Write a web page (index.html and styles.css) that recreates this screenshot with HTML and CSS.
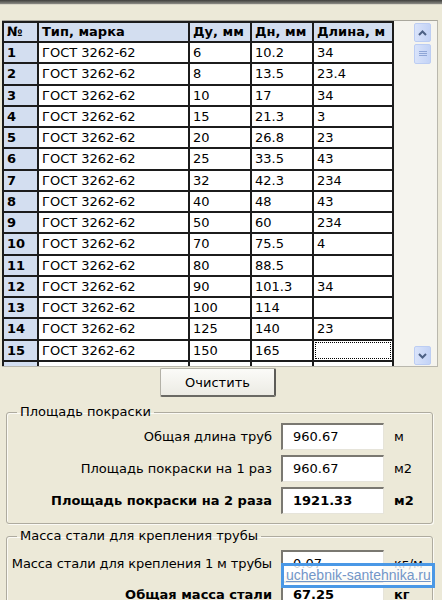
FILE: index.html
```html
<!DOCTYPE html>
<html lang="ru">
<head>
<meta charset="utf-8">
<title>Расчёт</title>
<link rel="stylesheet" href="styles.css">
</head>
<body>
<div class="titlebar"></div>
<div class="grid-frame">
  <div class="datagrid">
    <div class="c hdr">№</div><div class="c hdr">Тип, марка</div><div class="c hdr">Ду, мм</div><div class="c hdr">Дн, мм</div><div class="c hdr">Длина, м</div>
    <div class="c num">1</div><div class="c">ГОСТ 3262-62</div><div class="c">6</div><div class="c">10.2</div><div class="c">34</div>
    <div class="c num">2</div><div class="c">ГОСТ 3262-62</div><div class="c">8</div><div class="c">13.5</div><div class="c">23.4</div>
    <div class="c num">3</div><div class="c">ГОСТ 3262-62</div><div class="c">10</div><div class="c">17</div><div class="c">34</div>
    <div class="c num">4</div><div class="c">ГОСТ 3262-62</div><div class="c">15</div><div class="c">21.3</div><div class="c">3</div>
    <div class="c num">5</div><div class="c">ГОСТ 3262-62</div><div class="c">20</div><div class="c">26.8</div><div class="c">23</div>
    <div class="c num">6</div><div class="c">ГОСТ 3262-62</div><div class="c">25</div><div class="c">33.5</div><div class="c">43</div>
    <div class="c num">7</div><div class="c">ГОСТ 3262-62</div><div class="c">32</div><div class="c">42.3</div><div class="c">234</div>
    <div class="c num">8</div><div class="c">ГОСТ 3262-62</div><div class="c">40</div><div class="c">48</div><div class="c">43</div>
    <div class="c num">9</div><div class="c">ГОСТ 3262-62</div><div class="c">50</div><div class="c">60</div><div class="c">234</div>
    <div class="c num">10</div><div class="c">ГОСТ 3262-62</div><div class="c">70</div><div class="c">75.5</div><div class="c">4</div>
    <div class="c num">11</div><div class="c">ГОСТ 3262-62</div><div class="c">80</div><div class="c">88.5</div><div class="c"></div>
    <div class="c num">12</div><div class="c">ГОСТ 3262-62</div><div class="c">90</div><div class="c">101.3</div><div class="c">34</div>
    <div class="c num">13</div><div class="c">ГОСТ 3262-62</div><div class="c">100</div><div class="c">114</div><div class="c"></div>
    <div class="c num">14</div><div class="c">ГОСТ 3262-62</div><div class="c">125</div><div class="c">140</div><div class="c">23</div>
    <div class="c num">15</div><div class="c">ГОСТ 3262-62</div><div class="c">150</div><div class="c">165</div><div class="c focus"></div>
    <div class="c num"></div><div class="c"></div><div class="c"></div><div class="c"></div><div class="c"></div>
  </div>
  <div class="vscroll">
    <div class="sbtn"><svg width="9" height="6" viewBox="0 0 9 6"><polyline points="1,5 4.5,1.5 8,5" fill="none" stroke="#4d6185" stroke-width="2"/></svg></div>
    <div class="thumb"><svg width="8" height="8" viewBox="0 0 8 8"><path d="M0 1.5h8M0 3.5h8M0 5.5h8" stroke="#8ea5d6" stroke-width="1"/></svg></div>
    <div class="track"></div>
    <div class="sbtn"><svg width="9" height="6" viewBox="0 0 9 6"><polyline points="1,1 4.5,4.5 8,1" fill="none" stroke="#4d6185" stroke-width="2"/></svg></div>
  </div>
</div>
<div class="btn-row"><button class="btn" type="button">Очистить</button></div>
<fieldset class="group g1">
  <legend>Площадь покраски</legend>
  <div class="frows">
    <div class="frow"><span class="flabel">Общая длина труб</span><span class="fbox">960.67</span><span class="funit">м</span></div>
    <div class="frow"><span class="flabel">Площадь покраски на 1 раз</span><span class="fbox">960.67</span><span class="funit">м2</span></div>
    <div class="frow bold"><span class="flabel">Площадь покраски на 2 раза</span><span class="fbox">1921.33</span><span class="funit">м2</span></div>
  </div>
</fieldset>
<fieldset class="group g2">
  <legend>Масса стали для крепления трубы</legend>
  <div class="frows g2rows">
    <div class="frow"><span class="flabel narrow">Масса стали для крепления 1 м трубы</span><span class="fbox">0.07</span><span class="funit">кг/м</span></div>
    <div class="frow bold"><span class="flabel">Общая масса стали</span><span class="fbox">67.25</span><span class="funit">кг</span></div>
  </div>
</fieldset>
<div class="watermark">uchebnik-santehnika.ru</div>
</body>
</html>
```
FILE: styles.css
```css
html, body {
  margin: 0;
  padding: 0;
}
body {
  width: 442px;
  height: 600px;
  overflow: hidden;
  position: relative;
  background: #ece9d8;
  font-family: "DejaVu Sans", Verdana, sans-serif;
  font-size: 13px;
  color: #000;
}
.titlebar {
  height: 4px;
  background: linear-gradient(#3f3f3c, #8d8c86);
  border-bottom: 1px solid #d9d6c8;
}
.grid-frame {
  margin: 15px 0 0 2px;
  width: 436px;
  height: 347px;
  box-sizing: border-box;
  border-top: 1px solid #a9a79d;
  border-bottom: 1px solid #b9b7ad;
  border-right: 1px solid #b9b7ad;
  background: #f5f4ee;
  display: flex;
  overflow: hidden;
}
.datagrid {
  flex: none;
  align-self: flex-start;
  display: grid;
  grid-template-columns: 33px 149px 60px 60px 78px;
  grid-template-rows: 18px;
  grid-auto-rows: 19.25px;
  gap: 2px;
  padding: 2px 2px 0 2px;
  background: #1c1c1c;
}
.c {
  background: #fff;
  padding-left: 3px;
  line-height: 19px;
  white-space: nowrap;
  overflow: hidden;
}
.c.hdr {
  background: #d3def0;
  font-weight: bold;
  line-height: 18px;
}
.c.num {
  background: #d3def0;
  font-weight: bold;
}
.c.focus {
  outline: 1px dotted #000;
  outline-offset: -2px;
}
.vscroll {
  margin-left: auto;
  margin-right: 6px;
  width: 17px;
  display: flex;
  flex-direction: column;
  padding: 2px 0 1px;
}
.sbtn, .thumb {
  box-sizing: border-box;
  border: 1px solid #bccdf3;
  border-radius: 2px;
  background: linear-gradient(90deg, #d9e3fa, #c3d3f6);
  display: flex;
  align-items: center;
  justify-content: center;
}
.sbtn {
  height: 19px;
}
.thumb {
  height: 20px;
  margin-top: 2px;
}
.track {
  flex: 1;
}
.btn-row {
  padding-left: 160px;
  margin-top: 1px;
}
.btn {
  display: block;
  width: 116px;
  height: 29px;
  box-sizing: border-box;
  margin: 0;
  padding: 0;
  font-family: "DejaVu Sans", Verdana, sans-serif;
  font-size: 13px;
  color: #000;
  background: linear-gradient(#fbfbf8, #ecebe4);
  border: 1px solid #b3b1a7;
  border-right: 2px solid #5d5c58;
  border-bottom: 2px solid #6a6964;
  border-radius: 2px;
}
.group {
  box-sizing: border-box;
  width: 427px;
  margin: 7px 0 0 6px;
  padding: 0;
  border: 1px solid #aeab9f;
  border-radius: 3px;
  box-shadow: inset 1px 1px 0 #fbfaf5, 1px 1px 0 #fbfaf5;
  min-inline-size: 0;
}
.group legend {
  margin-left: 10px;
  padding: 0 3px;
  line-height: 16px;
}
.g1 {
  padding-bottom: 9px;
}
.g2 {
  margin-top: 2px;
  height: 120px;
}
.g2 legend {
  line-height: 20px;
}
.frows {
  display: flex;
  flex-direction: column;
  gap: 5px;
  padding-top: 3px;
}
.g2rows {
  padding-top: 4px;
  gap: 4px;
}
.frow {
  display: grid;
  grid-template-columns: 265px 103px auto;
  column-gap: 9px;
  align-items: center;
  height: 27px;
}
.frow.bold {
  font-weight: bold;
}
.flabel {
  text-align: right;
  white-space: nowrap;
}
.flabel.narrow {
  letter-spacing: -0.12px;
}
.fbox {
  box-sizing: border-box;
  height: 27px;
  background: #fff;
  border-top: 2px solid #7a7871;
  border-left: 2px solid #7a7871;
  border-right: 1px solid #e6e4da;
  border-bottom: 1px solid #e6e4da;
  padding-left: 10px;
  line-height: 24px;
}
.funit {
  padding-left: 1px;
}
.watermark {
  position: absolute;
  left: 281px;
  top: 563px;
  width: 154px;
  height: 25px;
  box-sizing: border-box;
  border: 3px solid #4a98e6;
  background: rgba(255, 255, 255, 0.8);
  color: #7396c8;
  text-decoration: underline;
  font-family: "Liberation Sans", Arial, sans-serif;
  font-size: 14px;
  line-height: 18px;
  padding-left: 2px;
  white-space: nowrap;
  overflow: hidden;
}
```
